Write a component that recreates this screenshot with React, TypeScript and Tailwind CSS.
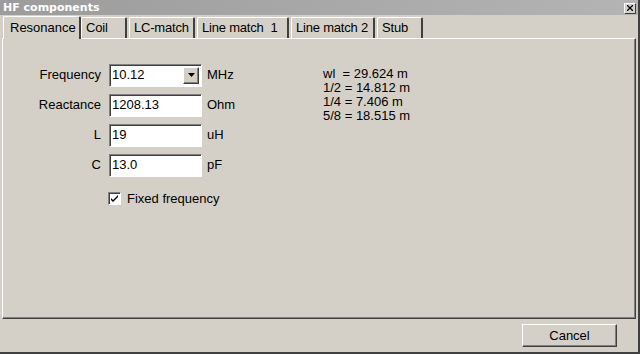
import React from "react";

const tabs = [
  { t: "Resonance", w: "w-[78px]" },
  { t: "Coil", w: "w-[46px]" },
  { t: "LC-match", w: "w-[66px]" },
  { t: "Line match  1", w: "w-[92px]" },
  { t: "Line match 2", w: "w-[84px]" },
  { t: "Stub", w: "w-[46px]" },
];

function Field({ label, value, unit, combo }: { label: string; value: string; unit: string; combo?: boolean }) {
  return (
    <div className="flex items-center h-[30px]">
      <div className="w-[81px] text-right pr-[8px]">{label}</div>
      <div className="relative w-[93px] h-[23px] bg-white border-t-[#808080] border-l-[#808080] border-r-white border-b-white border shadow-[inset_1px_1px_0_#404040] flex items-center pl-[2px]">
        <span className="whitespace-pre">{value}</span>
        {combo && (
          <div className="absolute right-[2px] top-[2px] w-[16px] h-[17px] bg-[#d4d0c8] border border-t-white border-l-white border-r-[#404040] border-b-[#404040] shadow-[inset_-1px_-1px_0_#808080] flex items-center justify-center">
            <svg width="7" height="4" viewBox="0 0 7 4">
              <path d="M0 0h7L3.5 4z" fill="#000" />
            </svg>
          </div>
        )}
      </div>
      <div className="pl-[5px]">{unit}</div>
    </div>
  );
}

export default function App() {
  return (
    <div
      className="w-[640px] h-[354px] bg-[#d4d0c8] flex flex-col text-[12px] text-black overflow-hidden border-r-2 border-b-2 border-r-[#404040] border-b-[#404040]"
      style={{ fontFamily: '"Liberation Sans", Arial, sans-serif' }}
    >
      {/* title bar */}
      <div className="h-[15px] bg-gradient-to-r from-[#9c9c9c] to-[#b4b4b4] flex items-center justify-between pl-[3px] pr-[2px]">
        <span className="text-white font-bold text-[11px] leading-none" style={{ fontFamily: '"DejaVu Sans", Verdana, sans-serif' }}>
          HF components
        </span>
        <div className="w-[12px] h-[11px] mt-[1px] bg-[#d4d0c8] border border-t-white border-l-white border-r-[#404040] border-b-[#404040] flex items-center justify-center">
          <svg width="6" height="6" viewBox="0 0 6 6">
            <path d="M0 0L6 6M6 0L0 6" stroke="#000" strokeWidth="1.3" />
          </svg>
        </div>
      </div>

      {/* tabs */}
      <div className="h-[23px] flex items-end pl-[3px] relative z-10">
        {tabs.map(({ t, w }, i) =>
          i === 0 ? (
            <div
              key={t}
              className={`${w} h-[23px] pl-[6px] bg-[#d4d0c8] border-t border-l border-t-white border-l-white border-r-2 border-r-[#404040] rounded-t-[2px] flex items-center text-[13px] mb-[-1px]`}
            >
              {t}
            </div>
          ) : (
            <div
              key={t}
              className={`${w} h-[21px] pl-[4px] bg-[#d4d0c8] border-t border-l border-t-white border-l-white border-r-2 border-r-[#404040] rounded-t-[2px] flex items-center text-[13px] tracking-[-0.2px] whitespace-pre ${i === 1 ? "ml-0" : "ml-[2px]"}`}
            >
              {t}
            </div>
          )
        )}
      </div>

      {/* panel */}
      <div className="flex-1 mx-[2px] border border-t-white border-l-white border-r-[#404040] border-b-[#404040] shadow-[inset_-1px_-1px_0_#808080] flex pt-[21px]">
        <div className="flex flex-col w-[300px] pl-[25px] text-[13px]">
          <Field label="Frequency" value="10.12" unit="MHz" combo />
          <Field label="Reactance" value="1208.13" unit="Ohm" />
          <Field label="L" value="19" unit="uH" />
          <Field label="C" value="13.0" unit="pF" />
          <div className="flex items-center mt-[9px] ml-[80px]">
            <div className="w-[13px] h-[13px] bg-white border border-t-[#808080] border-l-[#808080] border-r-white border-b-white shadow-[inset_1px_1px_0_#404040] flex items-center justify-center">
              <svg width="9" height="9" viewBox="0 0 9 9">
                <path d="M1 4l2 2 5-5v2L3 8 1 6z" fill="#000" />
              </svg>
            </div>
            <span className="ml-[6px]">Fixed frequency</span>
          </div>
        </div>
        <div className="pl-[20px] pt-[7px] leading-[14px] text-[13px] whitespace-pre">
          <div>wl  = 29.624 m</div>
          <div>1/2 = 14.812 m</div>
          <div>1/4 = 7.406 m</div>
          <div>5/8 = 18.515 m</div>
        </div>
      </div>

      {/* bottom */}
      <div className="h-[33px] flex items-start justify-end pr-[21px] pt-[5px]">
        <button className="w-[95px] h-[23px] bg-[#d4d0c8] border border-t-white border-l-white border-r-[#404040] border-b-[#404040] shadow-[inset_-1px_-1px_0_#808080] text-[13px]">
          Cancel
        </button>
      </div>
    </div>
  );
}
